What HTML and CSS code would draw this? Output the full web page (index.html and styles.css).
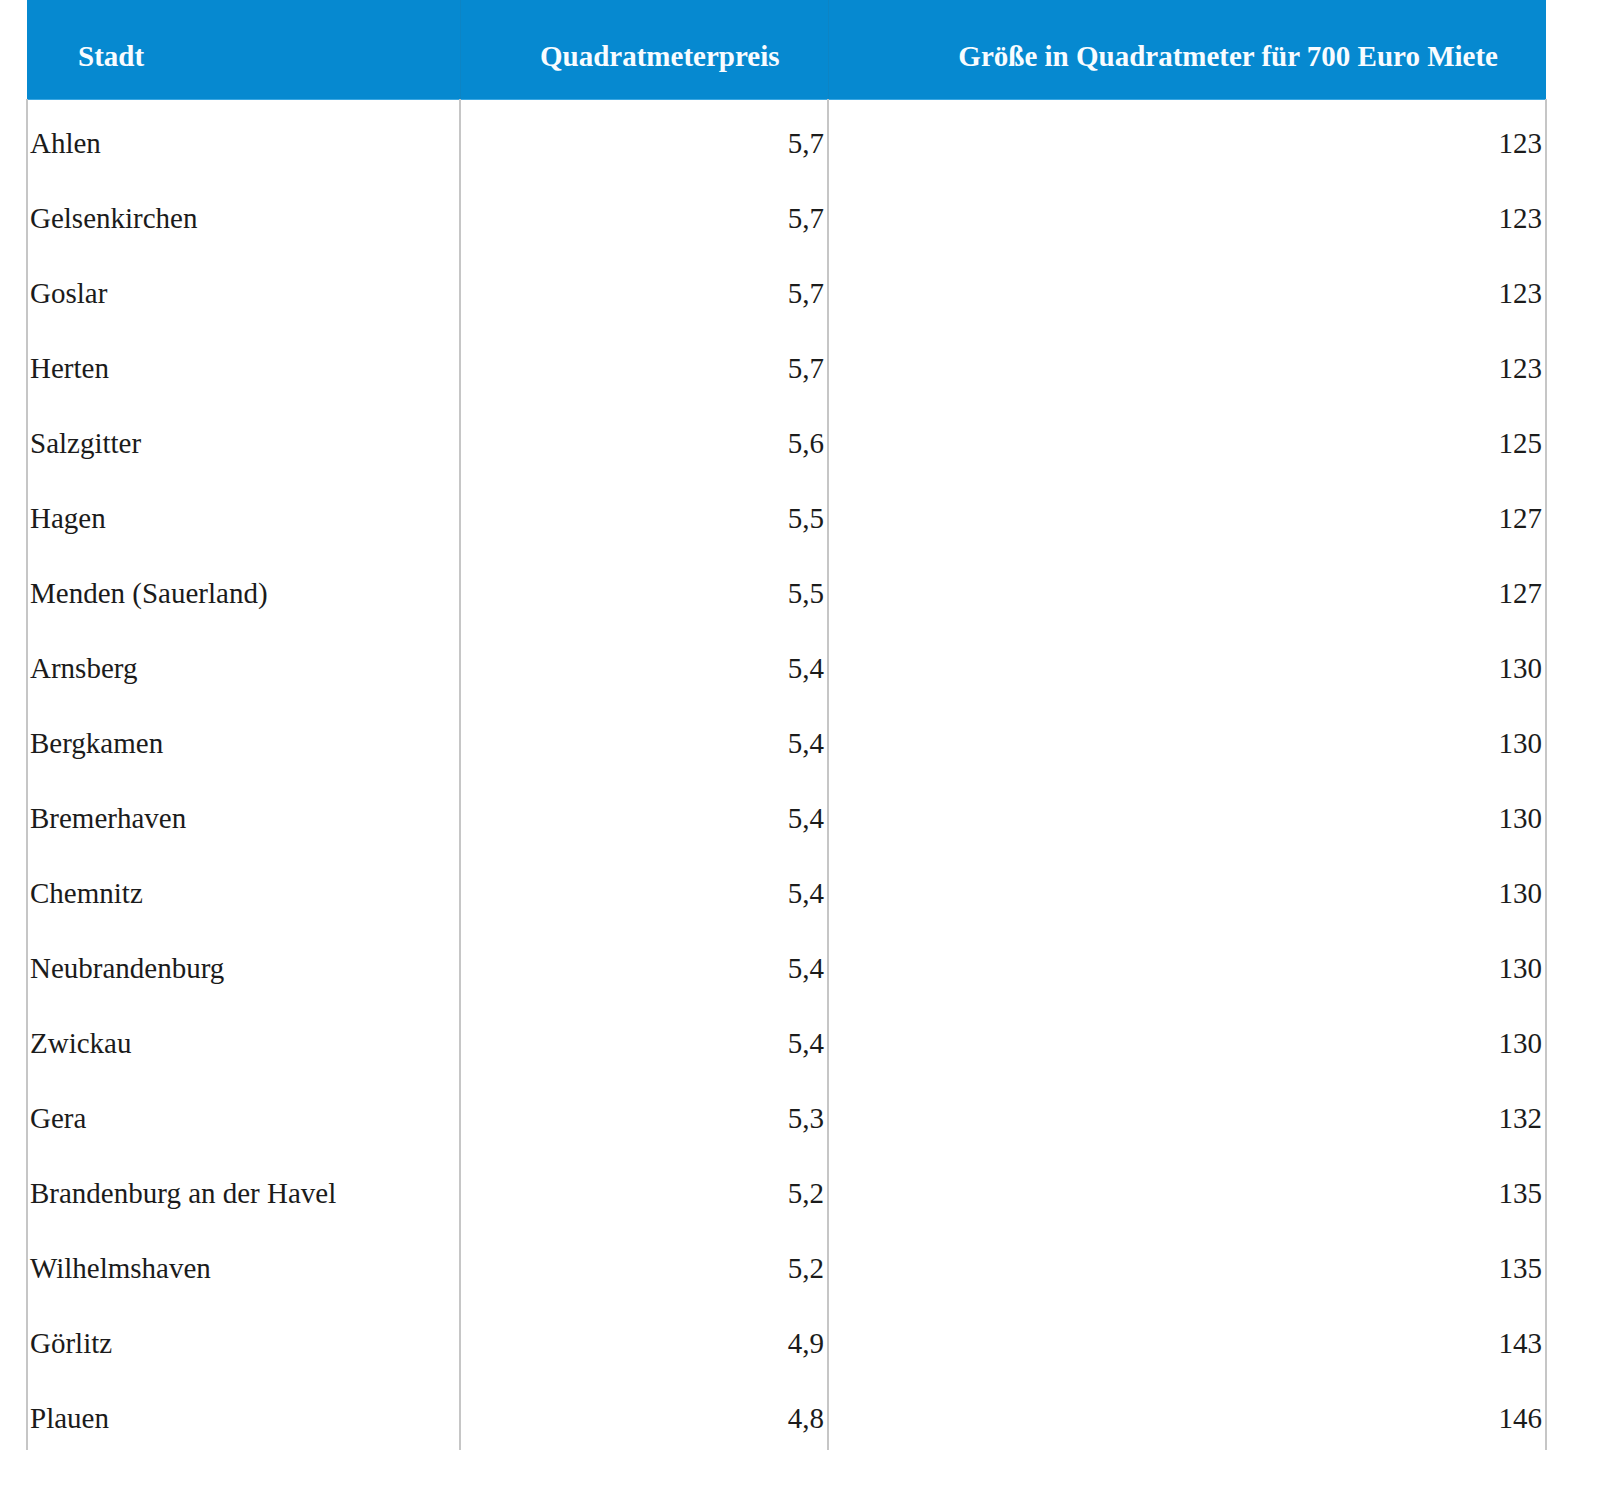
FILE: index.html
```html
<!DOCTYPE html>
<html lang="de">
<head>
<meta charset="utf-8">
<title>Quadratmeterpreise</title>
<link rel="stylesheet" href="styles.css">
</head>
<body>
<div class="wrap">
<table class="rent">
  <colgroup>
    <col class="c-city">
    <col class="c-price">
    <col class="c-size">
  </colgroup>
  <thead>
    <tr>
      <th class="h-city">Stadt</th>
      <th class="h-num">Quadratmeterpreis</th>
      <th class="h-num">Größe in Quadratmeter für 700 Euro Miete</th>
    </tr>
  </thead>
  <tbody>
    <tr><td class="city">Ahlen</td><td class="num">5,7</td><td class="num">123</td></tr>
    <tr><td class="city">Gelsenkirchen</td><td class="num">5,7</td><td class="num">123</td></tr>
    <tr><td class="city">Goslar</td><td class="num">5,7</td><td class="num">123</td></tr>
    <tr><td class="city">Herten</td><td class="num">5,7</td><td class="num">123</td></tr>
    <tr><td class="city">Salzgitter</td><td class="num">5,6</td><td class="num">125</td></tr>
    <tr><td class="city">Hagen</td><td class="num">5,5</td><td class="num">127</td></tr>
    <tr><td class="city">Menden (Sauerland)</td><td class="num">5,5</td><td class="num">127</td></tr>
    <tr><td class="city">Arnsberg</td><td class="num">5,4</td><td class="num">130</td></tr>
    <tr><td class="city">Bergkamen</td><td class="num">5,4</td><td class="num">130</td></tr>
    <tr><td class="city">Bremerhaven</td><td class="num">5,4</td><td class="num">130</td></tr>
    <tr><td class="city">Chemnitz</td><td class="num">5,4</td><td class="num">130</td></tr>
    <tr><td class="city">Neubrandenburg</td><td class="num">5,4</td><td class="num">130</td></tr>
    <tr><td class="city">Zwickau</td><td class="num">5,4</td><td class="num">130</td></tr>
    <tr><td class="city">Gera</td><td class="num">5,3</td><td class="num">132</td></tr>
    <tr><td class="city">Brandenburg an der Havel</td><td class="num">5,2</td><td class="num">135</td></tr>
    <tr><td class="city">Wilhelmshaven</td><td class="num">5,2</td><td class="num">135</td></tr>
    <tr><td class="city">Görlitz</td><td class="num">4,9</td><td class="num">143</td></tr>
    <tr><td class="city">Plauen</td><td class="num">4,8</td><td class="num">146</td></tr>
  </tbody>
</table>
</div>
</body>
</html>
```
FILE: styles.css
```css
html, body {
  margin: 0;
  padding: 0;
  background: #ffffff;
}

body {
  font-family: "Liberation Serif", "Times New Roman", serif;
  color: #1b1b1b;
}

.wrap {
  padding-left: 26px;
}

.rent {
  border-collapse: collapse;
  table-layout: fixed;
  width: 1519px;
}

.c-city { width: 433px; }
.c-price { width: 368px; }
.c-size { width: 718px; }

.rent th {
  background: #0689d0;
  color: #f8fcff;
  font-weight: bold;
  font-size: 29px;
  line-height: 34px;
  padding: 39px 0 26px 0;
  border-bottom: 1px solid #3ba7e2;
  white-space: nowrap;
}

.rent th + th {
  border-left: 1px solid #0d84c4;
}

.h-city {
  text-align: left;
  padding-left: 51px !important;
}

.h-num {
  text-align: right;
  padding-right: 48px !important;
}

.rent td {
  font-size: 29px;
  line-height: 34px;
  height: 34px;
  padding: 26px 0 15px 0;
  border-right: 2px solid #c6c6c6;
  white-space: nowrap;
}

.rent td.city {
  border-left: 2px solid #c6c6c6;
  padding-left: 2px;
  text-align: left;
}

.rent td.num {
  text-align: right;
  padding-right: 3px;
}
```
